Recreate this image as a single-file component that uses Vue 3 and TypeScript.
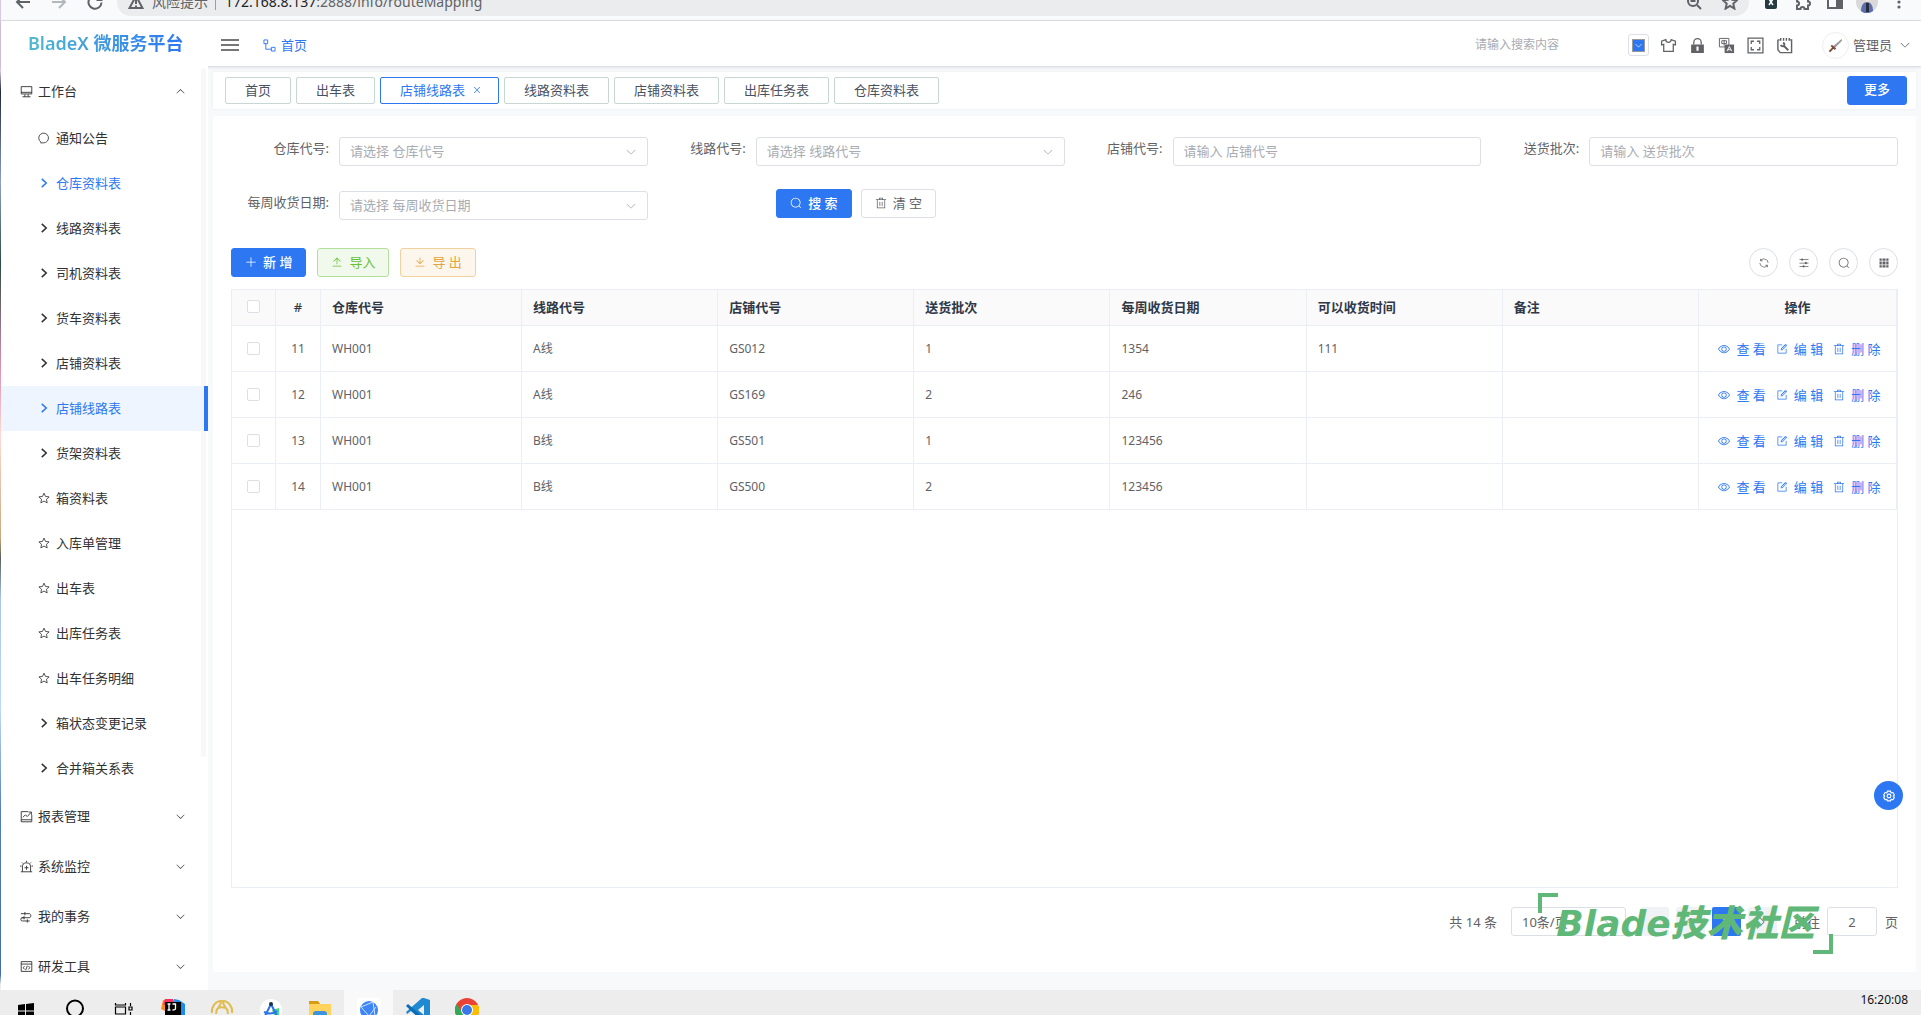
<script setup lang="ts">
import { h, ref } from 'vue'

const glyphs: Record<string, string> = {
  search: 'M795.904 750.72l124.992 124.928a32 32 0 0 1-45.248 45.248L750.656 795.904a416 416 0 1 1 45.248-45.248zM480 832a352 352 0 1 0 0-704 352 352 0 0 0 0 704z',
  down: 'M831.872 340.864 512 652.672 192.128 340.864a30.592 30.592 0 0 0-42.752 0 29.12 29.12 0 0 0 0 41.6L489.664 714.24a32 32 0 0 0 44.672 0l340.288-331.712a29.12 29.12 0 0 0 0-41.728 30.592 30.592 0 0 0-42.752 0z',
  remove: 'M160 256H96a32 32 0 0 1 0-64h256V95.936a32 32 0 0 1 32-32h256a32 32 0 0 1 32 32V192h256a32 32 0 1 1 0 64h-64v672a32 32 0 0 1-32 32H192a32 32 0 0 1-32-32zm448-64v-64H416v64zM224 896h576V256H224zm192-128a32 32 0 0 1-32-32V416a32 32 0 0 1 64 0v320a32 32 0 0 1-32 32m192 0a32 32 0 0 1-32-32V416a32 32 0 0 1 64 0v320a32 32 0 0 1-32 32',
  view: 'M512 160c320 0 512 352 512 352S832 864 512 864 0 512 0 512s192-352 512-352m0 64c-225.28 0-384.128 208.064-436.8 288 52.608 79.872 211.456 288 436.8 288 225.28 0 384.128-208.064 436.8-288-52.608-79.872-211.456-288-436.8-288m0 64a224 224 0 1 1 0 448 224 224 0 0 1 0-448m0 64a160.192 160.192 0 0 0-160 160c0 88.192 71.744 160 160 160s160-71.808 160-160-71.744-160-160-160',
  edit: 'M832 512a32 32 0 1 1 64 0v352a32 32 0 0 1-32 32H160a32 32 0 0 1-32-32V160a32 32 0 0 1 32-32h352a32 32 0 0 1 0 64H192v640h640zM469.952 554.24l52.8-7.552L847.104 264.32a32 32 0 1 0-45.248-45.248L477.44 501.44zm422.4-422.4a96 96 0 0 1 0 135.808l-331.84 331.84a32 32 0 0 1-18.112 9.088L436.8 623.68a32 32 0 0 1-36.224-36.224l15.104-105.6a32 32 0 0 1 9.024-18.112l331.904-331.84a96 96 0 0 1 135.744 0z',
  plus: 'M480 480V128a32 32 0 0 1 64 0v352h352a32 32 0 1 1 0 64H544v352a32 32 0 1 1-64 0V544H128a32 32 0 0 1 0-64z',
  upload: 'M160 832h704a32 32 0 1 1 0 64H160a32 32 0 1 1 0-64m384-578.304V704h-64V247.296L237.248 490.048 192 444.8 508.8 128l316.8 316.8-45.312 45.248z',
  download: 'M160 832h704a32 32 0 1 1 0 64H160a32 32 0 1 1 0-64m384-253.696 236.288-236.352 45.248 45.248L508.8 704 192 387.2l45.248-45.248L480 584.704V128h64z',
  close: 'M764.288 214.592 512 466.88 259.712 214.592a31.936 31.936 0 0 0-45.12 45.12L466.752 512 214.528 764.224a31.936 31.936 0 1 0 45.12 45.184L512 557.184l252.288 252.288a31.936 31.936 0 0 0 45.12-45.12L557.12 512.064l252.288-252.352a31.936 31.936 0 1 0-45.12-45.184z',
  refresh: 'M771.776 794.88A384 384 0 0 1 128 512h64a320 320 0 0 0 555.712 216.448H654.72a32 32 0 1 1 0-64h149.056a32 32 0 0 1 32 32v148.928a32 32 0 1 1-64 0v-50.56zM276.288 295.616h92.992a32 32 0 0 1 0 64H220.16a32 32 0 0 1-32-32V178.56a32 32 0 0 1 64 0v50.56A384 384 0 0 1 896.128 512h-64a320 320 0 0 0-555.776-216.384z',
  operation: 'M389.44 768a96.064 96.064 0 0 1 181.12 0H896v64H570.56a96.064 96.064 0 0 1-181.12 0H128v-64zm192-288a96.064 96.064 0 0 1 181.12 0H896v64H762.56a96.064 96.064 0 0 1-181.12 0H128v-64zm-320-288a96.064 96.064 0 0 1 181.12 0H896v64H442.56a96.064 96.064 0 0 1-181.12 0H128v-64z',
  grid: 'M640 384v256H384V384zm64 0h192v256H704zm-64 512H384V704h256zm64 0V704h192v192zm-64-768v192H384V128zm64 0h192v192H704zM320 384v256H128V384zm0 512H128V704h192zm0-768v192H128V128z',
}

/* Line icons on a 16 unit grid */
const lines: Record<string, string> = {
  monitor: 'M1.500 2h13v9h-13zM1.500 9h13M3 14.500h10M6 11.500v3M10 11.500v3',
  chat: 'M4 13.500A6.500 6.500 0 1 1 7 14.500H3.500z',
  arrow: 'M5 2.500l6 5.500l-6 5.500',
  star: 'M8 1.500l2 4.400 4.800.6-3.500 3.200.9 4.800L8 12.100l-4.200 2.400.9-4.800L1.200 6.500 6 5.900z',
  chart: 'M10 2H1.500v12.500h13V6M1.500 12h13M3.500 9l3-3 2.500 2 4.500-5M10.500 2.500h3.500v3.500',
  alarm: 'M1 14.500h14M3 14.500v-6a5 5 0 0 1 10 0v6M8 1v2M2.500 3l1.500 1.500M13.500 3L12 4.500M0 7.500h2M14 7.500h2M8 7v5M5.500 9.500h5',
  flow: 'M1 4.500h11M6 2.500v4M12 4.500a3 3 0 0 1 0 5H3a2 2 0 0 0 0 4h9M5 7.500v4M9 11.500v4M2 9.500h3',
  code: 'M1.500 2h13v12h-13zM1.500 5h13M5.500 7.500L4 9.500l1.500 2M10.500 7.500l1.500 2-1.500 2M9 7l-2 5.500',
}

const ElIcon = (props: { name: string }) =>
  h('svg', { viewBox: '0 0 1024 1024', fill: 'currentColor', 'aria-hidden': 'true' }, [h('path', { d: glyphs[props.name] })])
ElIcon.props = ['name']

const LineIcon = (props: { name: string }) =>
  h('svg', { viewBox: '0 0 16 16', fill: 'none', stroke: 'currentColor', 'stroke-width': props.name === 'arrow' ? 2 : 1.1, 'aria-hidden': 'true' }, [
    h('path', { d: lines[props.name] }),
  ])
LineIcon.props = ['name']

interface MenuItem { label: string; icon: string; state?: 'active' | 'hover' }
const items: MenuItem[] = [
  { label: '通知公告', icon: 'chat' },
  { label: '仓库资料表', icon: 'arrow', state: 'hover' },
  { label: '线路资料表', icon: 'arrow' },
  { label: '司机资料表', icon: 'arrow' },
  { label: '货车资料表', icon: 'arrow' },
  { label: '店铺资料表', icon: 'arrow' },
  { label: '店铺线路表', icon: 'arrow', state: 'active' },
  { label: '货架资料表', icon: 'arrow' },
  { label: '箱资料表', icon: 'star' },
  { label: '入库单管理', icon: 'star' },
  { label: '出车表', icon: 'star' },
  { label: '出库任务表', icon: 'star' },
  { label: '出车任务明细', icon: 'star' },
  { label: '箱状态变更记录', icon: 'arrow' },
  { label: '合并箱关系表', icon: 'arrow' },
]
const groups = [
  { label: '报表管理', icon: 'chart' },
  { label: '系统监控', icon: 'alarm' },
  { label: '我的事务', icon: 'flow' },
  { label: '研发工具', icon: 'code' },
]
const tabs = ['首页', '出车表', '店铺线路表', '线路资料表', '店铺资料表', '出库任务表', '仓库资料表']
const activeTab = ref('店铺线路表')

const fields = [
  { id: 'warehouse', label: '仓库代号', select: true },
  { id: 'route', label: '线路代号', select: true },
  { id: 'shop', label: '店铺代号', select: false },
  { id: 'batch', label: '送货批次', select: false },
  { id: 'weekday', label: '每周收货日期', select: true },
]
const columns = ['仓库代号', '线路代号', '店铺代号', '送货批次', '每周收货日期', '可以收货时间', '备注']
const rows = [
  { no: 11, cells: ['WH001', 'A线', 'GS012', '1', '1354', '111', ''] },
  { no: 12, cells: ['WH001', 'A线', 'GS169', '2', '246', '', ''] },
  { no: 13, cells: ['WH001', 'B线', 'GS501', '1', '123456', '', ''] },
  { no: 14, cells: ['WH001', 'B线', 'GS500', '2', '123456', '', ''] },
]
const actions = [
  { label: '查 看', icon: 'view' },
  { label: '编 辑', icon: 'edit' },
  { label: '删 除', icon: 'remove' },
]
const tools = [
  { label: '刷新', icon: 'refresh' },
  { label: '列设置', icon: 'operation' },
  { label: '搜索栏', icon: 'search' },
  { label: '网格', icon: 'grid' },
]
const jumpPage = ref('2')
</script>

<template>
  <div class="desktop">
    <div class="browser">
      <div class="nav">
        <svg viewBox="0 0 16 16" class="ln"><path d="M15 8H2M8 2L2 8l6 6" /></svg>
        <svg viewBox="0 0 16 16" class="ln pale"><path d="M1 8h13M8 2l6 6-6 6" /></svg>
        <svg viewBox="0 0 16 16" class="ln"><path d="M14.500 8.500A6.500 6.500 0 1 1 12.500 3.500L14.500 5.500M14.500 1v5h-5" /></svg>
      </div>
      <div class="url">
        <svg viewBox="0 0 16 16" class="ln"><path d="M8 2L1.500 14h13zM8 6v4M8 11.500v1.500" /></svg>
        <span class="risk">风险提示</span>
        <span class="bar"></span>
        <span class="address"><b>172.168.8.137</b>:2888/info/routeMapping</span>
        <span class="grow"></span>
        <svg viewBox="0 0 16 16" class="ln"><circle cx="7" cy="7" r="5" /><path d="M11 11l4 4M4.500 7h5" /></svg>
        <svg viewBox="0 0 16 16" class="ln"><path d="M8 1l2.100 4.700 5 .5-3.800 3.400 1.100 5L8 12l-4.400 2.600 1.100-5L.9 6.200l5-.5z" /></svg>
      </div>
      <div class="ext">
        <svg viewBox="0 0 16 16"><rect x="2" y="1" width="12" height="14" rx="2" fill="#263a42" /><path d="M6 5l4 6M10 5l-4 6" stroke="#fff" stroke-width="1.500" /></svg>
        <svg viewBox="0 0 16 16" class="ln"><path d="M2 4h4a2 2 0 0 1 4 0h3v3.500a2 2 0 0 1 0 4V15H9.500a2 2 0 0 0-4 0H2v-3.500a2 2 0 0 0 0-4z" /></svg>
        <svg viewBox="0 0 16 16" class="ln"><path d="M1 2h14v12H1z" /><path d="M10 2h5v12h-5z" fill="#5f6368" /></svg>
        <svg viewBox="0 0 22 22" class="face"><circle cx="11" cy="11" r="11" fill="#d9d9db" /><path d="M5 20c0-5 2-9 6-9s6 4 6 9c-4 3-9 3-12 0z" fill="#5b6fb0" /><path d="M10 12h3v9h-3z" fill="#2c2c38" /><circle cx="11" cy="8" r="3" fill="#efe0da" /></svg>
        <svg viewBox="0 0 16 16" class="dots"><circle cx="8" cy="3" r="1.600" /><circle cx="8" cy="8" r="1.600" /><circle cx="8" cy="13" r="1.600" /></svg>
      </div>
    </div>

    <header class="top">
      <div class="logo"><span>BladeX 微服务平台</span></div>
      <button class="burger" aria-label="折叠菜单"><i></i><i></i><i></i></button>
      <a href="#" class="home">
        <svg viewBox="0 0 14 14"><path d="M1 1h4v4H1zM9 9h4v4H9zM3 5v6h6" fill="none" stroke="currentColor" /></svg>
        首页
      </a>
      <span class="grow"></span>
      <input class="find" type="text" placeholder="请输入搜索内容" aria-label="请输入搜索内容" />
      <div class="icons">
        <button class="swatch" aria-label="主题色"><span><ElIcon name="down" /></span></button>
        <button aria-label="皮肤"><svg viewBox="0 0 16 16"><path d="M5.500 2.500L1.500 4v3.500l2-.5v6.500h9V7l2 .5V4l-4-1.500a2.500 2.500 0 0 1-5 0z" fill="none" stroke="currentColor" stroke-width="1.200" /></svg></button>
        <button aria-label="锁屏"><svg viewBox="0 0 16 16"><path d="M4.500 7V5a3.500 3.500 0 0 1 7 0v2" fill="none" stroke="currentColor" stroke-width="1.200" /><path d="M2 7h12v8H2zM7 9v4h2V9z" fill="currentColor" fill-rule="evenodd" /></svg></button>
        <button aria-label="语言"><svg viewBox="0 0 18 18"><path d="M1.500 1.500h10v9h-10zM4 4h5v3H4zM6.500 3v6" fill="none" stroke="currentColor" /><path d="M7 8h10v9H7z" fill="currentColor" /><path d="M9.500 15l2.500-5 2.500 5M10.500 13.500h3" stroke="#fff" fill="none" /></svg></button>
        <button aria-label="全屏"><svg viewBox="0 0 16 16"><path d="M1 1h14v14H1zM4 6.500V4h2.500M9.500 4H12v2.500M12 9.500V12H9.500M6.500 12H4V9.500" fill="none" stroke="currentColor" stroke-width="1.200" /></svg></button>
        <button aria-label="工具"><svg viewBox="0 0 18 18"><path d="M2 3v10.500l2.500 3h12V3h-2M2 3h2M5 1v3M8 1v3M11 1v3M14 1v3" fill="none" stroke="currentColor" stroke-width="1.500" /><path d="M5 8.500a2.500 2.500 0 0 0 3.500 1l4.500 4.500M8.500 9.500a2.500 2.500 0 0 0-1-3.500" fill="none" stroke="currentColor" stroke-width="2" /></svg></button>
      </div>
      <span class="avatar"><svg viewBox="0 0 16 16"><path d="M14.500 1L5 9l2 2 8-8z" fill="#9a9a9c" /><path d="M3.500 8l4.500 4M5.500 10.500L1.500 14.500" stroke="#7a4a36" stroke-width="2" /></svg></span>
      <button class="user">管理员 <ElIcon name="down" /></button>
    </header>

    <div class="body">
      <aside class="side">
        <a href="#" class="group first"><LineIcon name="monitor" /><span>工作台</span><ElIcon name="down" class="caret up" /></a>
        <a v-for="m in items" :key="m.label" href="#" class="item" :class="m.state"><LineIcon :name="m.icon" /><span>{{ m.label }}</span></a>
        <a v-for="g in groups" :key="g.label" href="#" class="group"><LineIcon :name="g.icon" /><span>{{ g.label }}</span><ElIcon name="down" class="caret" /></a>
        <i class="scroll"></i>
      </aside>

      <main class="main">
        <nav class="tabs">
          <button v-for="t in tabs" :key="t" class="tab" :class="{ on: t === activeTab }" @click="activeTab = t">
            {{ t }}<ElIcon v-if="t === activeTab" name="close" />
          </button>
          <span class="grow"></span>
          <button class="btn primary more">更多</button>
        </nav>

        <section class="card">
          <form class="form" @submit.prevent>
            <div v-for="f in fields" :key="f.id" class="field">
              <label :for="f.id">{{ f.label }}:</label>
              <div v-if="f.select" class="pick">
                <select :id="f.id"><option>请选择 {{ f.label }}</option></select>
                <ElIcon name="down" />
              </div>
              <input v-else :id="f.id" type="text" :placeholder="'请输入 ' + f.label" />
            </div>
            <div class="submit">
              <button class="btn primary"><ElIcon name="search" />搜 索</button>
              <button class="btn" type="reset"><ElIcon name="remove" />清 空</button>
            </div>
          </form>

          <div class="toolbar">
            <button class="btn primary"><ElIcon name="plus" />新 增</button>
            <button class="btn success"><ElIcon name="upload" />导入</button>
            <button class="btn warning"><ElIcon name="download" />导 出</button>
            <span class="grow"></span>
            <button v-for="t in tools" :key="t.icon" class="round" :aria-label="t.label"><ElIcon :name="t.icon" /></button>
          </div>

          <div class="grid">
            <table>
              <colgroup>
                <col class="c-check" /><col class="c-index" /><col class="c-first" />
                <col v-for="n in 6" :key="n" />
                <col class="c-ops" />
              </colgroup>
              <thead>
                <tr>
                  <th class="mid"><input type="checkbox" aria-label="全选" /></th>
                  <th class="mid num">#</th>
                  <th v-for="c in columns" :key="c">{{ c }}</th>
                  <th class="mid">操作</th>
                </tr>
              </thead>
              <tbody>
                <tr v-for="r in rows" :key="r.no">
                  <td class="mid"><input type="checkbox" :aria-label="'选择 ' + r.no" /></td>
                  <td class="mid">{{ r.no }}</td>
                  <td v-for="(c, i) in r.cells" :key="i">{{ c }}</td>
                  <td>
                    <div class="ops">
                      <button v-for="a in actions" :key="a.icon"><ElIcon :name="a.icon" />{{ a.label }}</button>
                    </div>
                  </td>
                </tr>
              </tbody>
            </table>
          </div>

          <div class="pager">
            <span class="total">共 14 条</span>
            <div class="size">
              <select aria-label="每页条数"><option>10条/页</option></select>
              <ElIcon name="down" />
            </div>
            <div class="pages">
              <button aria-label="上一页"><ElIcon name="down" class="left" /></button>
              <button>1</button>
              <button class="on">2</button>
              <button aria-label="下一页"><ElIcon name="down" class="right" /></button>
            </div>
            <label for="jump">前往</label>
            <input id="jump" v-model="jumpPage" type="text" />
            <span>页</span>
            <div class="mark">Blade技术社区</div>
          </div>
        </section>
        <button class="gear" aria-label="设置">
          <svg viewBox="0 0 16 16"><path d="M6 1.500h4l.8 2.200 2.400-.3 2 3.300L13.700 8l1.500 1.800-2 3-2.400-.3L10 14.500H6l-.8-2-2.400.3-2-3L2.300 8 .8 6.700l2-3.300 2.400.3z" /><circle cx="8" cy="8" r="2.500" /></svg>
        </button>
      </main>
    </div>

    <footer class="taskbar">
      <div class="apps">
        <span><svg viewBox="0 0 24 24"><path d="M4 7l7-1v6.500H4zM12 6l8-1v7.500h-8zM4 13.500h7V20l-7-1zM12 13.500h8V21l-8-1z" /></svg></span>
        <span><svg viewBox="0 0 24 24"><circle cx="12" cy="10.500" r="8" fill="none" stroke="#000" stroke-width="2" /></svg></span>
        <span><svg viewBox="0 0 24 24"><path d="M3.500 5v2h10V5M3.500 9h10v7h-10zM18.500 5v3M18.500 14v6M17 9h3v3h-3z" fill="none" stroke="#000" stroke-width="1.200" /></svg></span>
        <span><svg viewBox="0 0 24 24"><path d="M2 2l6-1 4 4-8 8-4-2z" fill="#ff8a1e" /><path d="M4 1h8l3 6H2z" fill="#f6335f" /><path d="M13 1l5 1 6 4v14h-9z" fill="#1a8cf0" /><path d="M4 4h16v17H4z" /><path d="M6.500 6h3M8 6v6M6.500 12h3M11.500 6h3v4.500q0 1.500-3 1.500" fill="none" stroke="#fff" stroke-width="1.300" /></svg></span>
        <span><svg viewBox="0 0 24 24" fill="none" stroke="#e0bd52" stroke-width="2"><path d="M2 15c-1-5 3-12 9-12 1 5-5 6-5 13M22 15c1-5-3-12-9-12-1 5 5 6 5 13M6 13c2-5 10-5 12 0" /></svg></span>
        <span><svg viewBox="0 0 24 24"><circle cx="12" cy="12" r="11" fill="#fff" /><path d="M13 12l7-2v7h-5z" fill="#3ddc84" /><path d="M12 6L6 18M12 6l6 12M5 14c4 2 9 2 13-1" stroke="#2d72e8" stroke-width="2" fill="none" /><circle cx="12" cy="6" r="2" fill="#14324a" /></svg></span>
        <span><svg viewBox="0 0 24 24"><path d="M1 3h9l2 3h11v16H1z" fill="#ffd35c" /><path d="M1 3h9l2 3H1z" fill="#d99b12" /><path d="M5 22v-6q0-3 3-3h8q3 0 3 3v6z" fill="#3d93dd" /></svg></span>
        <span class="on"><svg viewBox="0 0 24 24"><rect width="24" height="24" rx="4" fill="#fff" /><circle cx="12" cy="12" r="9" fill="#3e86f7" /><path d="M4 9l12-5 2 14M4 9l8 9 7-9" stroke="#cfe2ff" fill="none" /></svg></span>
        <span><svg viewBox="0 0 24 24"><path d="M18 0l6 2v20l-6 2L5 13l-4 3-1-2 16-14z" fill="#1f8ad2" /><path d="M18 7v10l-6-5z" fill="#ededed" /><path d="M0 8l2-2 16 14-1 4z" fill="#0a6db8" /></svg></span>
        <span><svg viewBox="0 0 24 24"><circle cx="12" cy="12" r="12" fill="#ea4335" /><path d="M1.600 6L9 17l2 7A12 12 0 0 1 1.600 6z" fill="#34a853" /><path d="M12 7h11a12 12 0 0 1-12 17l5-9z" fill="#fbbc04" /><circle cx="12" cy="12" r="6" fill="#fff" /><circle cx="12" cy="12" r="5" fill="#3b78e7" /></svg></span>
      </div>
      <time>16:20:08</time>
    </footer>
  </div>
</template>

<style>
body {
  margin: 0;
}
</style>

<style scoped>
.desktop {
  --blue: #2d77f2;
  --line: #ebeef5;
  --edge: #dcdfe6;
  box-sizing: border-box;
  display: flex;
  flex-direction: column;
  height: 100vh;
  padding-left: 1px;
  color: #606266;
  font: 13px/20px 'Noto Sans', 'Noto Sans CJK SC', sans-serif;
  background: linear-gradient(#d9c8e4 0, #d9c8e4 7%, #1c2740 9%, #8fa0c0 18%, #2c4a44 26%, #d98fb0 36%, #ffd9d4 43%, #c8a878 53%, #57605c 55%, #a9c4ec 59%, #bcd8ff 70%, #4f7fb8 80%, #3f6ea8 96%, #ededed 97%) 0 0 / 1px 100% no-repeat;
}
.desktop * {
  box-sizing: border-box;
}
button,
input,
select {
  font: inherit;
  color: inherit;
  border: 0;
  padding: 0;
  margin: 0;
  background: none;
  outline: none;
}
a {
  color: inherit;
  text-decoration: none;
}
svg {
  display: block;
  flex: none;
  width: 12px;
  height: 12px;
}
.grow {
  flex: 1;
}

/* Browser strip, anchored to its bottom edge */
.browser {
  display: flex;
  flex: none;
  align-items: flex-end;
  height: 21px;
  overflow: hidden;
  padding-bottom: 4px;
  background: #f8fafc;
  border-bottom: 1px solid #dfe1e5;
}
.nav,
.ext {
  display: flex;
  align-items: center;
  height: 28px;
}
.nav {
  gap: 20px;
  padding: 0 14px 0 14px;
}
.nav svg {
  width: 16px;
  height: 16px;
}
.ln {
  fill: none;
  stroke: #5f6368;
  stroke-width: 2;
}
.ln.pale {
  stroke: #b4b7bb;
}
.url {
  display: flex;
  flex: 1;
  align-items: center;
  height: 28px;
  padding: 0 11px;
  border-radius: 14px;
  background: #ebecee;
  color: #5f6368;
  font-size: 14px;
}
.url svg {
  width: 16px;
  height: 16px;
}
.url svg:last-child {
  margin-left: 20px;
}
.risk {
  padding: 0 7px 0 8px;
}
.bar {
  width: 1px;
  height: 16px;
  margin-right: 9px;
  background: #9a9da1;
}
.address b {
  color: #202124;
  font-weight: 400;
}
.ext {
  padding: 0 14px;
  gap: 16px;
}
.ext svg {
  width: 16px;
  height: 16px;
}
.ext .face {
  width: 22px;
  height: 22px;
  margin: 0 -3px;
}
.ext .dots {
  fill: #5f6368;
}

/* Header */
.top {
  position: relative;
  display: flex;
  flex: none;
  align-items: center;
  height: 45px;
  padding: 3px 10px 0 0;
  background: #fff;
  box-shadow: 0 1px 3px rgba(0, 21, 41, 0.16);
}
.logo {
  width: 207px;
  padding: 0 0 4px 27px;
  font-size: 18px;
  font-weight: 600;
  line-height: 26px;
}
.logo span {
  color: transparent;
  background: linear-gradient(90deg, #4fb9cf, var(--blue));
  background-clip: text;
}
.burger {
  display: flex;
  flex-direction: column;
  gap: 3px;
  width: 18px;
  margin-left: 13px;
}
.burger i {
  height: 2px;
  background: #777;
}
.home {
  display: flex;
  align-items: center;
  gap: 5px;
  margin-left: 24px;
  color: var(--blue);
}
.home svg {
  width: 13px;
  height: 13px;
}
.find {
  width: 140px;
  font-size: 12px;
}
input::placeholder {
  color: #a8abb2;
  opacity: 1;
}
.icons {
  display: flex;
  align-items: center;
  gap: 9px;
  margin-left: 13px;
}
.icons button {
  display: grid;
  place-items: center;
  width: 20px;
  height: 22px;
}
.icons svg {
  width: 17px;
  height: 17px;
}
.icons .swatch {
  margin-right: 1px;
  width: 21px;
  border: 1px solid var(--edge);
  border-radius: 3px;
}
.swatch span {
  display: grid;
  place-items: center;
  width: 13px;
  height: 13px;
  border: 1px solid #999;
  color: #fff;
  background: var(--blue);
}
.icons .swatch svg {
  width: 9px;
  height: 9px;
}
.avatar {
  display: grid;
  place-items: center;
  width: 27px;
  height: 27px;
  margin: 0 4px 0 27px;
  border: 1px solid #eee;
  border-radius: 50%;
}
.avatar svg {
  width: 15px;
  height: 15px;
}
.user {
  display: flex;
  align-items: center;
  gap: 7px;
}

/* Body */
.body {
  display: flex;
  flex: 1;
  min-height: 0;
  background: #f8f9fb;
}
.side {
  position: relative;
  width: 207px;
  overflow: hidden;
  background: #fff;
  color: #303133;
}
.group,
.item {
  position: relative;
  z-index: 1;
  display: flex;
  align-items: center;
  padding-bottom: 1px;
}
.group {
  gap: 5px;
  height: 50px;
  padding: 0 22px 0 19px;
}
.group svg {
  width: 13px;
  height: 13px;
}
.group .caret {
  width: 11px;
  height: 11px;
  margin-left: auto;
}
.up {
  transform: rotate(180deg);
}
.item {
  gap: 6px;
  height: 45px;
  padding-left: 37px;
}
.item.hover,
.item.active {
  color: var(--blue);
}
.item.active {
  background: #eef5fe;
  border-right: 4px solid var(--blue);
}
.scroll {
  position: absolute;
  top: 2px;
  right: 2px;
  width: 5px;
  height: 689px;
  border-radius: 3px;
  background: #f6f8f9;
}
.main {
  position: relative;
  display: flex;
  flex: 1;
  flex-direction: column;
  gap: 7px;
  min-width: 0;
  padding: 6px 5px 18px;
}
.tabs {
  display: flex;
  align-items: center;
  gap: 5px;
  height: 37px;
  padding: 0 9px 1px 12px;
  background: #fff;
  box-shadow: 0 0 3px rgba(0, 0, 0, 0.06);
}
.tab {
  display: flex;
  align-items: center;
  gap: 7px;
  height: 27px;
  padding: 0 19px 1px;
  border: 1px solid #c8d6d4;
  border-radius: 2px;
  color: #495060;
  background: #fff;
}
.tab svg {
  width: 10px;
  height: 10px;
}
.tab.on {
  padding-right: 16px;
  border-color: var(--blue);
  color: var(--blue);
}
.card {
  display: flex;
  flex: 1;
  flex-direction: column;
  padding: 19px 18px 36px;
  border-radius: 4px;
  background: #fff;
}

/* Search form */
.form {
  display: grid;
  grid-template-columns: repeat(4, 1fr);
}
.field {
  display: flex;
  align-items: flex-start;
  height: 54px;
}
.field label {
  width: 108px;
  padding-right: 10px;
  line-height: 27px;
  text-align: right;
}
.pick {
  position: relative;
  flex: 1;
}
.pick select,
.field input {
  width: 100%;
  height: 29px;
  margin-top: 2px;
  padding: 0 10px 2px;
  border: 1px solid var(--edge);
  border-radius: 3px;
  background: #fff;
}
.field input {
  flex: 1;
  width: auto;
  min-width: 0;
}
select {
  appearance: none;
}
.pick select {
  color: #a8abb2;
}
.pick svg,
.size svg {
  position: absolute;
  top: 11px;
  right: 11px;
  color: #a8abb2;
  pointer-events: none;
}
.submit {
  display: flex;
  justify-content: center;
  gap: 9px;
}
.btn {
  display: flex;
  align-items: center;
  justify-content: center;
  gap: 6px;
  height: 29px;
  padding: 0 13px 1px;
  border: 1px solid var(--edge);
  border-radius: 3px;
  background: #fff;
}
.btn.primary {
  border-color: var(--blue);
  color: #fff;
  font-weight: 500;
  background: var(--blue);
}
.btn.success {
  border-color: #b3e19d;
  color: #67c23a;
  background: #f0f9eb;
}
.btn.warning {
  border-color: #f3d19e;
  color: #e6a23c;
  background: #fdf6ec;
}
.btn.more {
  padding: 0 16px 2px;
}
.toolbar {
  display: flex;
  gap: 11px;
  margin: 5px 0 12px;
}
.round {
  display: grid;
  place-items: center;
  width: 29px;
  height: 29px;
  border: 1px solid var(--edge);
  border-radius: 50%;
}

/* Data table */
.grid {
  flex: 1;
  border: 1px solid var(--line);
}
table {
  width: 100%;
  table-layout: fixed;
  border-collapse: separate;
  border-spacing: 0;
}
.c-check {
  width: 44px;
}
.c-index {
  width: 45px;
}
.c-first {
  width: 201px;
}
.c-ops {
  width: 198px;
}
th,
td {
  padding: 0 11px;
  border-right: 1px solid var(--line);
  border-bottom: 1px solid var(--line);
  text-align: left;
}
th {
  height: 36px;
  padding-bottom: 2px;
  color: #303848;
  font-weight: 700;
  background: #fafafa;
}
td {
  height: 46px;
  font-size: 12px;
}
th.num {
  font-weight: 500;
}
th.mid,
td.mid {
  padding-right: 0;
  padding-left: 0;
  text-align: center;
}
input[type='checkbox'] {
  appearance: none;
  display: block;
  width: 13px;
  height: 13px;
  margin: 0 auto;
  border: 1px solid var(--edge);
  border-radius: 2px;
  background: #fff;
}
.ops {
  display: flex;
  justify-content: center;
  gap: 10px;
  margin: 0 -13px 0 -9px;
  color: var(--blue);
  font-size: 13px;
}
.ops button {
  display: flex;
  align-items: center;
  gap: 6px;
}

/* Pagination */
.pager {
  position: relative;
  display: flex;
  align-items: center;
  justify-content: flex-end;
  height: 29px;
  margin-top: 19px;
}
.size {
  position: relative;
  width: 115px;
  margin: 0 14px;
}
.size svg {
  top: 9px;
}
.size select,
#jump {
  width: 100%;
  height: 29px;
  padding: 0 10px;
  border: 1px solid var(--edge);
  border-radius: 3px;
}
.pages {
  display: flex;
  gap: 7px;
  margin-right: 17px;
}
.pages button {
  display: grid;
  place-items: center;
  width: 29px;
  height: 29px;
  border-radius: 2px;
  background: #f1f2f6;
}
.pages .on {
  color: #fff;
  font-weight: 700;
  background: var(--blue);
}
.left {
  transform: rotate(90deg);
}
.right {
  transform: rotate(-90deg);
}
#jump {
  width: 50px;
  margin: 0 8px 0 7px;
  text-align: center;
}
.mark {
  position: absolute;
  top: -14px;
  right: 65px;
  width: 295px;
  height: 61px;
  color: #5fb878;
  font: italic 900 36px/61px 'DejaVu Sans', 'Noto Sans CJK SC', sans-serif;
  text-align: center;
  white-space: nowrap;
  pointer-events: none;
}
.mark::before,
.mark::after {
  position: absolute;
  width: 16px;
  height: 16px;
  content: '';
}
.mark::before {
  top: 0;
  left: 0;
  border-top: 4px solid;
  border-left: 4px solid;
}
.mark::after {
  right: 0;
  bottom: 0;
  border-right: 4px solid;
  border-bottom: 4px solid;
}
.gear {
  position: absolute;
  right: 18px;
  bottom: 180px;
  display: grid;
  place-items: center;
  width: 29px;
  height: 29px;
  border-radius: 50%;
  background: var(--blue);
}
.gear svg {
  fill: none;
  stroke: #fff;
  stroke-width: 1.500;
}

/* Taskbar */
.taskbar {
  display: flex;
  flex: none;
  justify-content: space-between;
  height: 25px;
  overflow: hidden;
  background: #ededed;
}
.apps {
  display: flex;
}
.apps span {
  display: flex;
  justify-content: center;
  width: 49px;
  height: 40px;
  padding-top: 8px;
}
.apps .on {
  background: #f9f9f9;
}
.apps svg {
  width: 24px;
  height: 24px;
}
time {
  padding-right: 13px;
  color: #111;
  font-size: 12px;
}
</style>
